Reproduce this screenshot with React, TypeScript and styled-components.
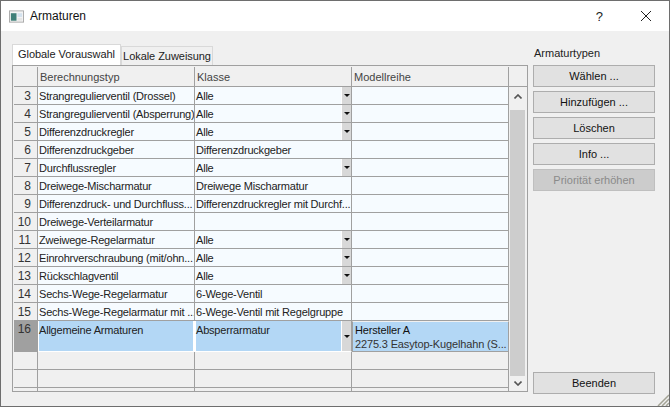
import React from "react";
import styled, { createGlobalStyle } from "styled-components";

const GlobalStyle = createGlobalStyle`
  html, body {
    margin: 0;
    padding: 0;
    background: #f0f0f0;
  }
  * {
    box-sizing: border-box;
  }
`;

type RowData = {
  no: number;
  typ: string;
  klasse: string;
  combo?: boolean;
};

const rows: RowData[] = [
  { no: 3, typ: "Strangregulierventil (Drossel)", klasse: "Alle", combo: true },
  { no: 4, typ: "Strangregulierventil (Absperrung)", klasse: "Alle", combo: true },
  { no: 5, typ: "Differenzdruckregler", klasse: "Alle", combo: true },
  { no: 6, typ: "Differenzdruckgeber", klasse: "Differenzdruckgeber" },
  { no: 7, typ: "Durchflussregler", klasse: "Alle", combo: true },
  { no: 8, typ: "Dreiwege-Mischarmatur", klasse: "Dreiwege Mischarmatur" },
  { no: 9, typ: "Differenzdruck- und Durchfluss...", klasse: "Differenzdruckregler mit Durchf..." },
  { no: 10, typ: "Dreiwege-Verteilarmatur", klasse: "" },
  { no: 11, typ: "Zweiwege-Regelarmatur", klasse: "Alle", combo: true },
  { no: 12, typ: "Einrohrverschraubung (mit/ohn...", klasse: "Alle", combo: true },
  { no: 13, typ: "Rückschlagventil", klasse: "Alle", combo: true },
  { no: 14, typ: "Sechs-Wege-Regelarmatur", klasse: "6-Wege-Ventil" },
  { no: 15, typ: "Sechs-Wege-Regelarmatur mit ...", klasse: "6-Wege-Ventil mit Regelgruppe" },
];

const COLS = "24px 157px 157px 157px 1fr";

const App = () => {
  return (
    <Window>
      <GlobalStyle />
      <TitleBar>
        <TitleIcon viewBox="0 0 16 13">
          <rect x="0.5" y="0.5" width="15" height="12" fill="#f4f4f4" stroke="#a8a8a8" />
          <rect x="2" y="3" width="6" height="8" fill="#3f7f78" />
          <rect x="9" y="3" width="5" height="4" fill="#d4e2ee" />
          <rect x="9" y="8" width="5" height="3" fill="#e6e6e6" />
        </TitleIcon>
        <TitleText>Armaturen</TitleText>
        <HelpButton>?</HelpButton>
        <CloseButton viewBox="0 0 12 12">
          <path d="M1 1 L11 11 M11 1 L1 11" stroke="#222" strokeWidth="1" fill="none" />
        </CloseButton>
      </TitleBar>
      <Body>
        <LeftPane>
          <TabBar>
            <Tab $active>Globale Vorauswahl</Tab>
            <Tab>Lokale Zuweisung</Tab>
          </TabBar>
          <GridBox>
            <Row $height={20}>
              <RowHead $plain />
              <HeadCell>Berechnungstyp</HeadCell>
              <HeadCell>Klasse</HeadCell>
              <HeadCell>Modellreihe</HeadCell>
              <HeadCorner />
            </Row>
            {rows.map((r) => (
              <Row key={r.no} $height={18}>
                <RowHead>{r.no}</RowHead>
                <Cell>{r.typ}</Cell>
                <Cell>
                  {r.klasse}
                  {r.combo && (
                    <ComboButton>
                      <Arrow />
                    </ComboButton>
                  )}
                </Cell>
                <Cell />
              </Row>
            ))}
            <Row $height={31}>
              <RowHead $selected>16</RowHead>
              <SelectedCell>Allgemeine Armaturen</SelectedCell>
              <SelectedCell $combo>
                Absperrarmatur
                <ComboButton>
                  <Arrow />
                </ComboButton>
              </SelectedCell>
              <ModelCell>
                <ModelMaker>Hersteller A</ModelMaker>
                <span>2275.3 Easytop-Kugelhahn (S...</span>
              </ModelCell>
            </Row>
            <Row $height={18}>
              <RowHead $plain />
              <Cell $empty />
              <Cell $empty />
              <Cell $empty />
            </Row>
            <Row $height={18}>
              <RowHead $plain />
              <Cell $empty />
              <Cell $empty />
              <Cell $empty />
            </Row>
            <Row $height={3}>
              <RowHead $plain $open />
              <Cell $empty $open />
              <Cell $empty $open />
              <Cell $empty $open />
            </Row>
            <ScrollBar>
              <ScrollArrow viewBox="0 0 8 5">
                <path d="M0.5 4.5 L4 1 L7.5 4.5" stroke="#555" strokeWidth="1.6" fill="none" />
              </ScrollArrow>
              <ScrollThumb />
              <ScrollArrow viewBox="0 0 8 5">
                <path d="M0.5 0.5 L4 4 L7.5 0.5" stroke="#555" strokeWidth="1.6" fill="none" />
              </ScrollArrow>
            </ScrollBar>
          </GridBox>
        </LeftPane>
        <SidePane>
          <SideLabel>Armaturtypen</SideLabel>
          <SideButton>Wählen ...</SideButton>
          <SideButton>Hinzufügen ...</SideButton>
          <SideButton>Löschen</SideButton>
          <SideButton>Info ...</SideButton>
          <SideButton $disabled>Priorität erhöhen</SideButton>
          <EndButton>Beenden</EndButton>
        </SidePane>
      </Body>
      <Grip viewBox="0 0 12 12">
        <path d="M12 1 L1 12 M12 5 L5 12 M12 9 L9 12" stroke="#a3a395" strokeWidth="1.5" fill="none" />
      </Grip>
    </Window>
  );
};

const Window = styled.div`
  position: relative;
  display: flex;
  flex-direction: column;
  width: 670px;
  height: 407px;
  overflow: hidden;
  background: #f0f0f0;
  border: 1px solid #6e6e6e;
  font-family: "Liberation Sans", Arial, sans-serif;
  font-size: 11px;
  color: #222222;
`;
const TitleBar = styled.div`
  display: flex;
  align-items: center;
  flex: none;
  height: 30px;
  padding-left: 8px;
  background: #ffffff;
`;
const TitleIcon = styled.svg`
  width: 15px;
  height: 13px;
`;
const TitleText = styled.span`
  margin-left: 6px;
  font-size: 12px;
  color: #111111;
`;
const HelpButton = styled.span`
  margin-left: auto;
  font-size: 13px;
  color: #222222;
`;
const CloseButton = styled.svg`
  width: 12px;
  height: 12px;
  margin: 0 17px 0 37px;
`;
const Body = styled.div`
  display: flex;
  flex: 1;
  padding: 13px 14px 0 11px;
`;
const LeftPane = styled.div`
  display: flex;
  flex-direction: column;
  width: 516px;
`;
const TabBar = styled.div`
  display: flex;
  align-items: flex-end;
  height: 21px;
`;
const Tab = styled.div<{ $active?: boolean }>`
  display: flex;
  align-items: center;
  justify-content: center;
  height: ${(p) => (p.$active ? "21px" : "19px")};
  width: ${(p) => (p.$active ? "109px" : "92px")};
  padding-bottom: ${(p) => (p.$active ? "2px" : "0")};
  background: ${(p) => (p.$active ? "#ffffff" : "#f0f0f0")};
  border: 1px solid #d9d9d9;
  border-bottom: none;
  white-space: nowrap;
  letter-spacing: -0.05px;
`;
const GridBox = styled.div`
  position: relative;
  display: flex;
  flex-direction: column;
  height: 327px;
  padding: 1px 0 0 1px;
  border: 1px solid #a0a0a0;
  background: #f0f0f0;
`;
const Row = styled.div<{ $height: number }>`
  display: grid;
  grid-template-columns: ${COLS};
  grid-template-rows: minmax(0, 1fr);
  flex: none;
  height: ${(p) => p.$height}px;
`;
const RowHead = styled.div<{ $plain?: boolean; $selected?: boolean; $open?: boolean }>`
  display: flex;
  justify-content: flex-end;
  padding: ${(p) => (p.$selected ? "0" : "1px")} 6px 0 0;
  background: ${(p) => (p.$selected ? "#a0a0a0" : "#f0f0f0")};
  border-right: 1px solid #a0a0a0;
  border-bottom: ${(p) => (p.$open ? "none" : "1px solid #a0a0a0")};
  font-size: 12px;
  line-height: 17px;
  color: #333333;
`;
const HeadCell = styled.div`
  padding: 2px 0 0 2px;
  border-right: 1px solid #a0a0a0;
  border-bottom: 1px solid #a0a0a0;
  color: #444444;
  line-height: 16px;
`;
const HeadCorner = styled.div`
  border-bottom: 1px solid #a0a0a0;
`;
const Cell = styled.div<{ $empty?: boolean; $open?: boolean }>`
  position: relative;
  padding: 0 0 0 1px;
  overflow: hidden;
  white-space: nowrap;
  letter-spacing: -0.2px;
  background: ${(p) => (p.$empty ? "#f0f0f0" : "#f6fbff")};
  border-right: 1px solid #a0a0a0;
  border-bottom: ${(p) => (p.$open ? "none" : "1px solid #a0a0a0")};
  line-height: 18px;
`;
const SelectedCell = styled.div<{ $combo?: boolean }>`
  position: relative;
  padding: 0 0 0 1px;
  white-space: nowrap;
  letter-spacing: -0.2px;
  background: #b3d7f5;
  border-right: ${(p) => (p.$combo ? "1px solid #a0a0a0" : "2px solid #ffffff")};
  border-bottom: 1px solid #ffffff;
  box-shadow: inset 1px 0 0 #ffffff;
  line-height: 18px;
`;
const ModelCell = styled.div`
  display: flex;
  flex-direction: column;
  padding: 1px 0 0 2px;
  background: #b3d7f5;
  border: 1px solid #a0a0a0;
  border-top: 1px solid #f0f0f0;
  line-height: 14px;
  white-space: nowrap;
  letter-spacing: -0.15px;
  color: #333333;
`;
const ModelMaker = styled.span`
  color: #111111;
`;
const ComboButton = styled.span`
  position: absolute;
  top: 0;
  right: 0;
  bottom: 0;
  display: flex;
  align-items: center;
  justify-content: center;
  width: 9px;
  background: #d8d8d8;
  box-shadow: -1px 0 0 #ffffff;
`;
const Arrow = styled.span`
  width: 0;
  height: 0;
  border-left: 3px solid transparent;
  border-right: 3px solid transparent;
  border-top: 3px solid #111111;
`;
const ScrollBar = styled.div`
  position: absolute;
  top: 21px;
  right: 0;
  bottom: 0;
  display: flex;
  flex-direction: column;
  align-items: center;
  width: 18px;
  padding: 7px 0 5px;
`;
const ScrollArrow = styled.svg`
  flex: none;
  width: 8px;
  height: 5px;
`;
const ScrollThumb = styled.div`
  flex: 1;
  align-self: stretch;
  margin: 11px 2px 5px 1px;
  background: #cdcdcd;
`;
const SidePane = styled.div`
  display: flex;
  flex-direction: column;
  width: 122px;
  margin-left: 5px;
  padding-top: 2px;
`;
const SideLabel = styled.div`
  height: 19px;
  padding-left: 1px;
  line-height: 15px;
`;
const SideButton = styled.div<{ $disabled?: boolean }>`
  display: flex;
  align-items: center;
  justify-content: center;
  flex: none;
  height: 22px;
  margin-bottom: 4px;
  background: ${(p) => (p.$disabled ? "#cccccc" : "#e1e1e1")};
  border: 1px solid ${(p) => (p.$disabled ? "#bfbfbf" : "#adadad")};
  color: ${(p) => (p.$disabled ? "#8a8a8a" : "#111111")};
`;
const EndButton = styled(SideButton)`
  margin-top: auto;
  margin-bottom: 12px;
`;
const Grip = styled.svg`
  position: absolute;
  right: 0;
  bottom: 0;
  width: 12px;
  height: 12px;
`;

export default App;
